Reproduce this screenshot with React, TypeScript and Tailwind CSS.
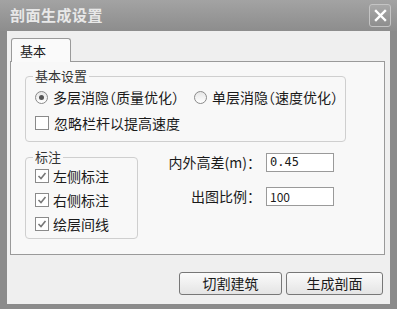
import React from "react";

const font = { fontFamily: '"Noto Sans CJK SC", "Noto Sans", sans-serif' };

function Radio({ checked }: { checked?: boolean }) {
  return (
    <span className="w-[13px] h-[13px] rounded-full border border-[#8a8a8a] bg-gradient-to-b from-[#e6e6e6] to-[#ffffff] flex items-center justify-center shrink-0">
      {checked && <span className="w-[5px] h-[5px] rounded-full bg-[#555]" />}
    </span>
  );
}

function Check({ checked }: { checked?: boolean }) {
  return (
    <span className="w-[14px] h-[14px] border border-[#8a8a8a] bg-white flex items-center justify-center shrink-0">
      {checked && (
        <svg width="10" height="10" viewBox="0 0 10 10">
          <path d="M1.5 5 L4 7.5 L8.5 2" fill="none" stroke="#777" strokeWidth="1.6" />
        </svg>
      )}
    </span>
  );
}

export default function App() {
  return (
    <div className="w-[397px] h-[309px] bg-[#8b8b8b] flex flex-col text-[14px] text-[#1a1a1a] [font-feature-settings:'halt']" style={font}>
      <div className="h-[31px] shrink-0 flex items-center justify-between pl-[10px] pr-[6px] bg-gradient-to-b from-[#a3a3a3] to-[#8d8d8d]">
        <span className="text-[15px] font-bold text-[#e8e8e8] tracking-[0.5px]">剖面生成设置</span>
        <div className="w-[22px] h-[23px] rounded-[3px] border border-[#c4c4c4] bg-gradient-to-b from-[#a8a8a8] to-[#8e8e8e] flex items-center justify-center">
          <svg width="13" height="13" viewBox="0 0 13 13">
            <path d="M2 2 L11 11 M11 2 L2 11" stroke="#fff" strokeWidth="2.4" strokeLinecap="square" />
          </svg>
        </div>
      </div>
      <div className="flex-1 mx-[7px] mb-[5px] bg-[#efefef] flex flex-col pt-[7px] pl-[3px] pr-[5px]">
        <div className="flex pl-[1px]">
          <div className="w-[60px] h-[24px] border border-b-0 border-[#9a9a9a] rounded-t-[3px] bg-[#fafafa] pl-[8px] pt-[2px] relative z-10 -mb-[1px] text-[13px]">
            基本
          </div>
        </div>
        <div className="h-[194px] border border-[#9a9a9a] bg-[#f8f8f8] pt-[14px] pl-[14px] flex flex-col gap-[15px]">
          <div className="relative w-[321px] h-[66px] border border-[#cfcfcf] rounded-[4px] pt-[11px] pl-[9px] flex flex-col gap-[8px]">
            <span className="absolute -top-[10px] left-[7px] px-[2px] bg-[#f8f8f8] leading-[18px] text-[#333] text-[13px]">基本设置</span>
            <div className="flex items-center h-[18px]">
              <Radio checked />
              <span className="ml-[5px]">多层消隐（质量优化）</span>
              <span className="ml-[15px]"><Radio /></span>
              <span className="ml-[5px]">单层消隐（速度优化）</span>
            </div>
            <div className="flex items-center h-[18px]">
              <Check />
              <span className="ml-[5px]">忽略栏杆以提高速度</span>
            </div>
          </div>
          <div className="flex">
            <div className="relative w-[113px] h-[82px] border border-[#cfcfcf] rounded-[4px] pt-[9px] pl-[9px] flex flex-col gap-[6px]">
              <span className="absolute -top-[10px] left-[7px] px-[2px] bg-[#f8f8f8] leading-[18px] text-[#333] text-[13px]">标注</span>
              <div className="flex items-center h-[18px]">
                <Check checked />
                <span className="ml-[4px]">左侧标注</span>
              </div>
              <div className="flex items-center h-[18px]">
                <Check checked />
                <span className="ml-[4px]">右侧标注</span>
              </div>
              <div className="flex items-center h-[18px]">
                <Check checked />
                <span className="ml-[4px]">绘层间线</span>
              </div>
            </div>
            <div className="ml-[25px] -mt-[5px] flex flex-col gap-[13px]">
              <div className="flex items-center">
                <span className="w-[98px] text-right pr-[7px]">内外高差(m)：</span>
                <div className="ml-[5px] w-[68px] h-[19px] border border-[#9a9a9a] bg-white pl-[3px] text-[12px] leading-[17px]" style={{ fontFamily: '"DejaVu Sans Mono", monospace' }}>0.45</div>
              </div>
              <div className="flex items-center">
                <span className="w-[98px] text-right pr-[7px]">出图比例：</span>
                <div className="ml-[5px] w-[68px] h-[19px] border border-[#9a9a9a] bg-white pl-[3px] text-[12px] leading-[17px]">100</div>
              </div>
            </div>
          </div>
        </div>
        <div className="flex justify-end gap-[4px] mt-[17px] pr-[2px]">
          <button className="w-[103px] h-[23px] border border-[#777] rounded-[3px] bg-gradient-to-b from-[#fbfbfb] to-[#e4e4e4] text-[14px]">切割建筑</button>
          <button className="w-[97px] h-[23px] border border-[#777] rounded-[3px] bg-gradient-to-b from-[#fbfbfb] to-[#e4e4e4] text-[14px]">生成剖面</button>
        </div>
      </div>
    </div>
  );
}
